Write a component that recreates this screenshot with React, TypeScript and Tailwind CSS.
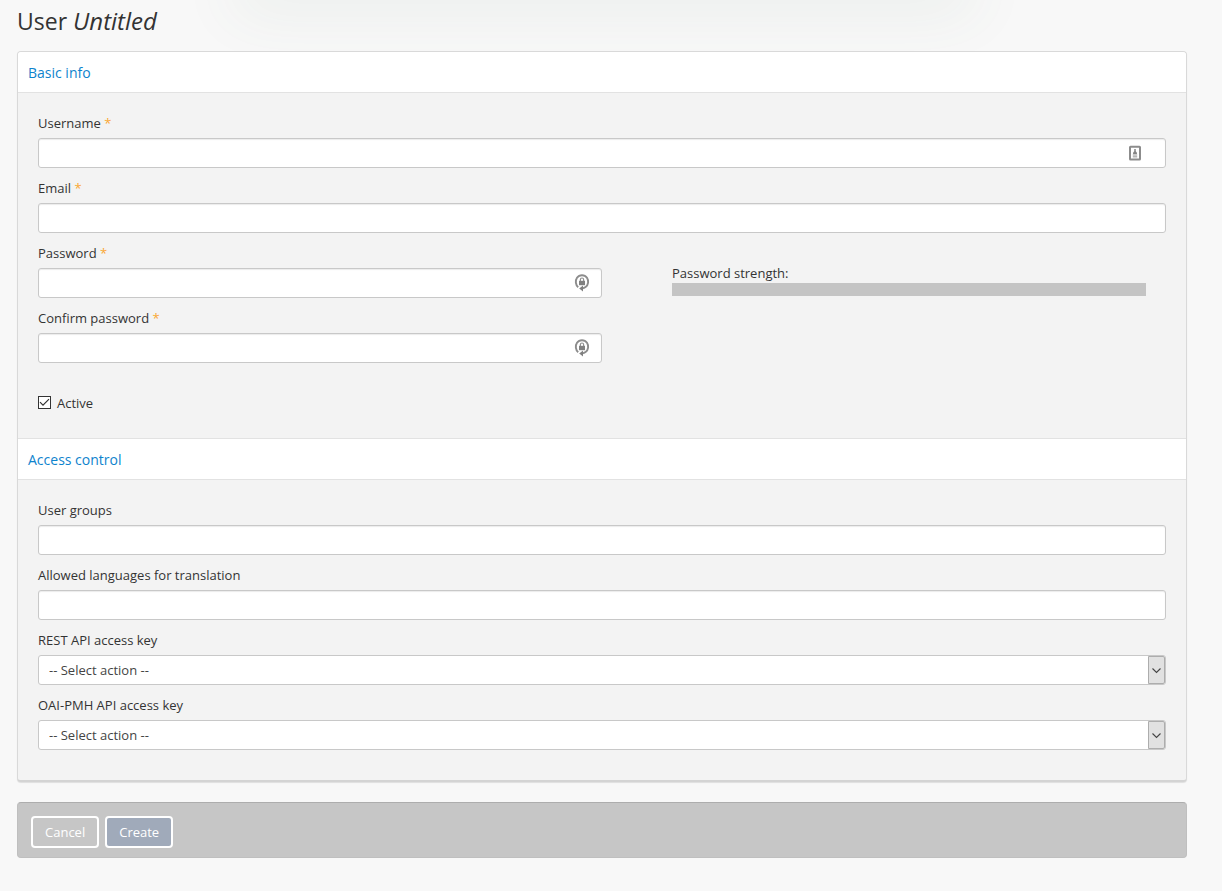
import { useState } from "react";
import type { ReactNode } from "react";

const inputClass =
  "block w-full h-[30px] px-2.5 rounded-[3px] border border-[#c8c8c8] bg-white text-[13px] text-[#555] shadow-[inset_0_1px_1px_rgba(0,0,0,0.08)] outline-none focus:border-[#0e83cd]";

type FieldProps = {
  id: string;
  label: string;
  required?: boolean;
  children: ReactNode;
};

const Field = ({ id, label, required, children }: FieldProps) => (
  <div className="mb-2.5">
    <label htmlFor={id} className="block mb-[5px] leading-5">
      {label}
      {required && <span className="text-[#faa732]"> *</span>}
    </label>
    <div className="relative">{children}</div>
  </div>
);

const SectionTitle = ({ children }: { children: ReactNode }) => (
  <h2 className="px-2.5 pt-[11px] pb-[9px] border-b border-[#e2e2e2] bg-white text-sm leading-5 text-[#0e83cd]">
    {children}
  </h2>
);

const ContactIcon = () => (
  <svg
    className="absolute right-6 top-[7px] w-3.5 h-4 pointer-events-none"
    viewBox="0 0 14 16"
    fill="none"
  >
    <rect x="2" y="1.8" width="10" height="12.6" rx="0.5" stroke="#8c8c8c" strokeWidth="2" />
    <path d="M7 4v3" stroke="#999" strokeWidth="1.8" />
    <path d="M5 9c0-1.8.8-2.8 2-2.8S9 7.2 9 9z" fill="#858585" />
    <path d="M4.8 10h4.4M4.8 11.8h4.4" stroke="#b8b8b8" strokeWidth="1.4" />
  </svg>
);

const KeyIcon = () => (
  <svg
    className="absolute right-3 top-[6px] w-4 h-[18px] pointer-events-none"
    viewBox="0 0 16 18"
    fill="none"
  >
    <path
      d="M4.2 13.2C1.4 11 1.2 6.4 3 3.8 5.4 0.4 10.6 0.4 13 3.8c1.8 2.8 1.6 7-1.4 9.2-1 .7-2 1.2-3.2 1.4"
      stroke="#8c8c8c"
      strokeWidth="1.9"
    />
    <path d="M9 11.6v5.8L5.2 14.5z" fill="#808080" />
    <rect x="5" y="6.8" width="6" height="4.4" fill="#808080" />
    <path d="M6.4 7V5.6a1.6 1.6 0 0 1 3.2 0V7" stroke="#8f8f8f" strokeWidth="1.2" />
  </svg>
);

const ActionSelect = ({ id }: { id: string }) => (
  <>
    <select
      id={id}
      className="block w-full h-[30px] pt-0.5 pl-2.5 pr-6 appearance-none rounded-[3px] border border-[#c8c8c8] bg-white text-[13px] text-[#444] outline-none"
    >
      <option>-- Select action --</option>
    </select>
    <span className="absolute right-px inset-y-px flex w-[17px] items-center justify-center rounded-r-[2px] border border-[#adadad] bg-[#e1e1e1] pointer-events-none">
      <svg className="w-[9px] h-[9px]" viewBox="0 0 9 9" fill="none">
        <path d="M0.5 2.5l4 4 4-4" stroke="#444" strokeWidth="1.1" />
      </svg>
    </span>
  </>
);

export default function App() {
  const [username, setUsername] = useState("");
  const [email, setEmail] = useState("");
  const [password, setPassword] = useState("");
  const [confirm, setConfirm] = useState("");
  const [active, setActive] = useState(true);

  return (
    <div className="relative min-h-screen overflow-hidden bg-[#f8f8f8] pl-[17px] pr-[35px] pt-1.5 pb-8 font-['Open_Sans',sans-serif] text-[13px] text-[#333]">
      {/* soft shadow falling from the top edge */}
      <div className="absolute left-[20%] right-[21%] -top-5 h-5 rounded-full shadow-[0_0_60px_15px_rgba(70,110,90,0.07)]" />

      <form className="relative" onSubmit={(e) => e.preventDefault()}>
        <h1 className="mb-[15px] text-[23px] leading-[30px]">
          User <em className="text-2xl leading-[30px]">Untitled</em>
        </h1>

        <div className="rounded border border-[#d9d9d9] border-b-2 border-b-[#d4d4d4] bg-[#f3f3f3] shadow-[0_1px_1px_rgba(0,0,0,0.1)] overflow-hidden">
          <section>
            <SectionTitle>Basic info</SectionTitle>
            <div className="px-5 pt-5 pb-[25px]">
              <Field id="username" label="Username" required>
                <input
                  id="username"
                  type="text"
                  className={inputClass}
                  value={username}
                  onChange={(e) => setUsername(e.target.value)}
                />
                <ContactIcon />
              </Field>
              <Field id="email" label="Email" required>
                <input
                  id="email"
                  type="email"
                  className={inputClass}
                  value={email}
                  onChange={(e) => setEmail(e.target.value)}
                />
              </Field>

              <div className="grid grid-cols-2">
                <div>
                  <Field id="password" label="Password" required>
                    <input
                      id="password"
                      type="password"
                      className={inputClass}
                      value={password}
                      onChange={(e) => setPassword(e.target.value)}
                    />
                    <KeyIcon />
                  </Field>
                  <Field id="confirm" label="Confirm password" required>
                    <input
                      id="confirm"
                      type="password"
                      className={inputClass}
                      value={confirm}
                      onChange={(e) => setConfirm(e.target.value)}
                    />
                    <KeyIcon />
                  </Field>
                </div>
                <div className="pl-[70px] pr-5 pt-5">
                  <p className="leading-5">Password strength:</p>
                  <div className="h-[13px] bg-[#c4c4c4]" />
                </div>
              </div>

              <label className="mt-5 flex w-fit items-center gap-1.5 leading-5">
                <span className="relative pb-0.5">
                  <input
                    type="checkbox"
                    className="block w-[13px] h-[13px] appearance-none border border-[#333] bg-white"
                    checked={active}
                    onChange={(e) => setActive(e.target.checked)}
                  />
                  {active && (
                    <svg
                      className="absolute inset-0 w-[13px] h-[13px] pointer-events-none"
                      viewBox="0 0 13 13"
                      fill="none"
                    >
                      <path d="M2 6.2l3 3 6-6" stroke="#333" strokeWidth="1.2" />
                    </svg>
                  )}
                </span>
                Active
              </label>
            </div>
          </section>

          <section className="border-t border-[#e2e2e2]">
            <SectionTitle>Access control</SectionTitle>
            <div className="p-5">
              <Field id="groups" label="User groups">
                <input id="groups" type="text" className={inputClass} />
              </Field>
              <Field id="languages" label="Allowed languages for translation">
                <input id="languages" type="text" className={inputClass} />
              </Field>
              <Field id="rest-key" label="REST API access key">
                <ActionSelect id="rest-key" />
              </Field>
              <Field id="oai-key" label="OAI-PMH API access key">
                <ActionSelect id="oai-key" />
              </Field>
            </div>
          </section>
        </div>

        <div className="mt-5 flex gap-1.5 rounded border border-[#bfbfbf] border-t-[#adadad] bg-[#c6c6c6] px-[13px] pt-[13px] pb-[9px]">
          <button
            type="button"
            className="h-8 px-3 pt-0.5 rounded border-2 border-white text-white"
          >
            Cancel
          </button>
          <button
            type="submit"
            className="h-8 px-3 pt-0.5 rounded border-2 border-white bg-[#a0aaba] text-white"
          >
            Create
          </button>
        </div>
      </form>
    </div>
  );
}
